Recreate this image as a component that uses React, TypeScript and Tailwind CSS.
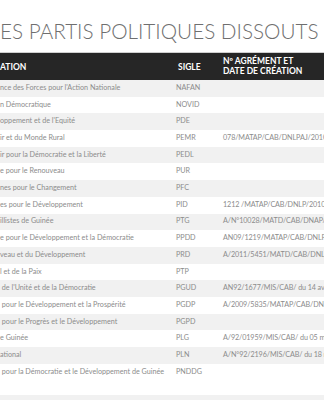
const rows: [string, string, string][] = [
  ['nce des Forces pour l\'Action Nationale', 'NAFAN', ''],
  ['n Démocratique', 'NOVID', ''],
  ['oppement et de l\'Equité', 'PDE', ''],
  ['ir et du Monde Rural', 'PEMR', '078/MATAP/CAB/DNLPAJ/2010'],
  ['ir pour la Démocratie et la Liberté', 'PEDL', ''],
  ['e pour le Renouveau', 'PUR', ''],
  ['nes pour le Changement', 'PFC', ''],
  ['es pour le Développement', 'PID', '1212 /MATAP/CAB/DNLP/2010'],
  ['illistes de Guinée', 'PTG', 'A/N°10028/MATD/CAB/DNAP/09'],
  ['e pour le Développement et la Démocratie', 'PPDD', 'AN09/1219/MATAP/CAB/DNLPAJ/2009'],
  ['veau et du Développement', 'PRD', 'A/2011/5451/MATD/CAB/DNLPAJ'],
  ['l et de la Paix', 'PTP', ''],
  [' de l\'Unité et de la Démocratie', 'PGUD', 'AN92/1677/MIS/CAB/ du 14 avril 1992'],
  [' pour le Développement et la Prospérité', 'PGDP', 'A/2009/5835/MATAP/CAB/DNLPAJ'],
  [' pour le Progrès et le Développement', 'PGPD', ''],
  ['e Guinée', 'PLG', 'A/92/01959/MIS/CAB/ du 05 mai 1992'],
  ['ational', 'PLN', 'A/N°92/2196/MIS/CAB/ du 18 mai 1992'],
  [' pour la Démocratie et le Développement de Guinée', 'PNDDG', ''],
]

export default function App() {
  return (
    <div className="h-[400px] w-[324px] overflow-hidden bg-white font-['Lato',sans-serif]">
      <h1 className="whitespace-nowrap pt-[18px] text-[20.7px] font-light leading-[26px] text-[#6f6f6f]">
        ES PARTIS POLITIQUES DISSOUTS (2010)
      </h1>

      <div className="mt-[8px] w-[420px] border-t border-[#cfcfcf]">
        <div className="flex h-[27px] items-center bg-[#262626] text-[8.5px] font-bold uppercase leading-[9.5px] text-white">
          <div className="w-[176px] pt-[2px]">ation</div>
          <div className="w-[47px] pl-[2px] pt-[2px]">Sigle</div>
          <div className="flex-1">
            <div>Nº agrément et</div>
            <div>date de création</div>
          </div>
        </div>

        {rows.map(([name, sigle, agrement], i) => (
          <div
            key={sigle}
            className={`flex text-[7.2px] text-[#8c8c8c] ${i % 2 === 0 ? 'bg-[#f1f1f1]' : 'bg-white'} ${i === rows.length - 1 ? 'h-[31px]' : 'h-[16.7px]'}`}
          >
            <div className="flex h-[16.7px] w-[176px] items-center whitespace-pre">{name}</div>
            <div className="flex h-[16.7px] w-[47px] items-center">{sigle}</div>
            <div className="flex h-[16.7px] flex-1 items-center whitespace-nowrap tracking-[-0.1px]">{agrement}</div>
          </div>
        ))}
        <div className="h-[10px] bg-[#f1f1f1]" />
      </div>
    </div>
  )
}
